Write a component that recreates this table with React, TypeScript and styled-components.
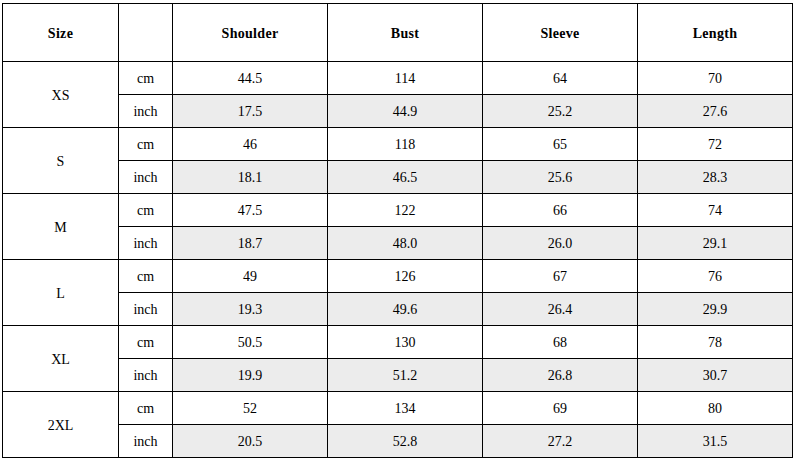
import React from "react";
import styled, { createGlobalStyle } from "styled-components";

const Global = createGlobalStyle`
  html, body { margin: 0; padding: 0; background: #ffffff; }
`;

const Wrap = styled.div`
  padding: 3px 0 0 2px;
`;

const Table = styled.table`
  border-collapse: collapse;
  table-layout: fixed;
  width: 790px;
  font-family: "Liberation Serif", "Times New Roman", serif;
  font-size: 14px;
  color: #000;
`;

const HeadCell = styled.th`
  height: 55px;
  padding: 2px 0 0 0;
  border: 1px solid #000;
  font-weight: bold;
  letter-spacing: 0.3px;
  text-align: center;
  vertical-align: middle;
`;

const Cell = styled.td<{ $shade?: boolean }>`
  height: 30px;
  padding: 2px 0 0 0;
  border: 1px solid #000;
  text-align: center;
  vertical-align: middle;
  background: ${(p) => (p.$shade ? "#ececec" : "#ffffff")};
`;

const rows: [string, string[], string[]][] = [
  ["XS", ["44.5", "114", "64", "70"], ["17.5", "44.9", "25.2", "27.6"]],
  ["S", ["46", "118", "65", "72"], ["18.1", "46.5", "25.6", "28.3"]],
  ["M", ["47.5", "122", "66", "74"], ["18.7", "48.0", "26.0", "29.1"]],
  ["L", ["49", "126", "67", "76"], ["19.3", "49.6", "26.4", "29.9"]],
  ["XL", ["50.5", "130", "68", "78"], ["19.9", "51.2", "26.8", "30.7"]],
  ["2XL", ["52", "134", "69", "80"], ["20.5", "52.8", "27.2", "31.5"]],
];

export default function App() {
  return (
    <>
      <Global />
      <Wrap>
        <Table>
          <colgroup>
            <col style={{ width: 116 }} />
            <col style={{ width: 54 }} />
            <col style={{ width: 155 }} />
            <col style={{ width: 155 }} />
            <col style={{ width: 155 }} />
            <col style={{ width: 155 }} />
          </colgroup>
          <thead>
            <tr>
              <HeadCell>Size</HeadCell>
              <HeadCell></HeadCell>
              <HeadCell>Shoulder</HeadCell>
              <HeadCell>Bust</HeadCell>
              <HeadCell>Sleeve</HeadCell>
              <HeadCell>Length</HeadCell>
            </tr>
          </thead>
          <tbody>
            {rows.map(([size, cm, inch]) => (
              <React.Fragment key={size}>
                <tr>
                  <Cell rowSpan={2}>{size}</Cell>
                  <Cell>cm</Cell>
                  {cm.map((v, i) => (
                    <Cell key={i}>{v}</Cell>
                  ))}
                </tr>
                <tr>
                  <Cell>inch</Cell>
                  {inch.map((v, i) => (
                    <Cell key={i} $shade>
                      {v}
                    </Cell>
                  ))}
                </tr>
              </React.Fragment>
            ))}
          </tbody>
        </Table>
      </Wrap>
    </>
  );
}
